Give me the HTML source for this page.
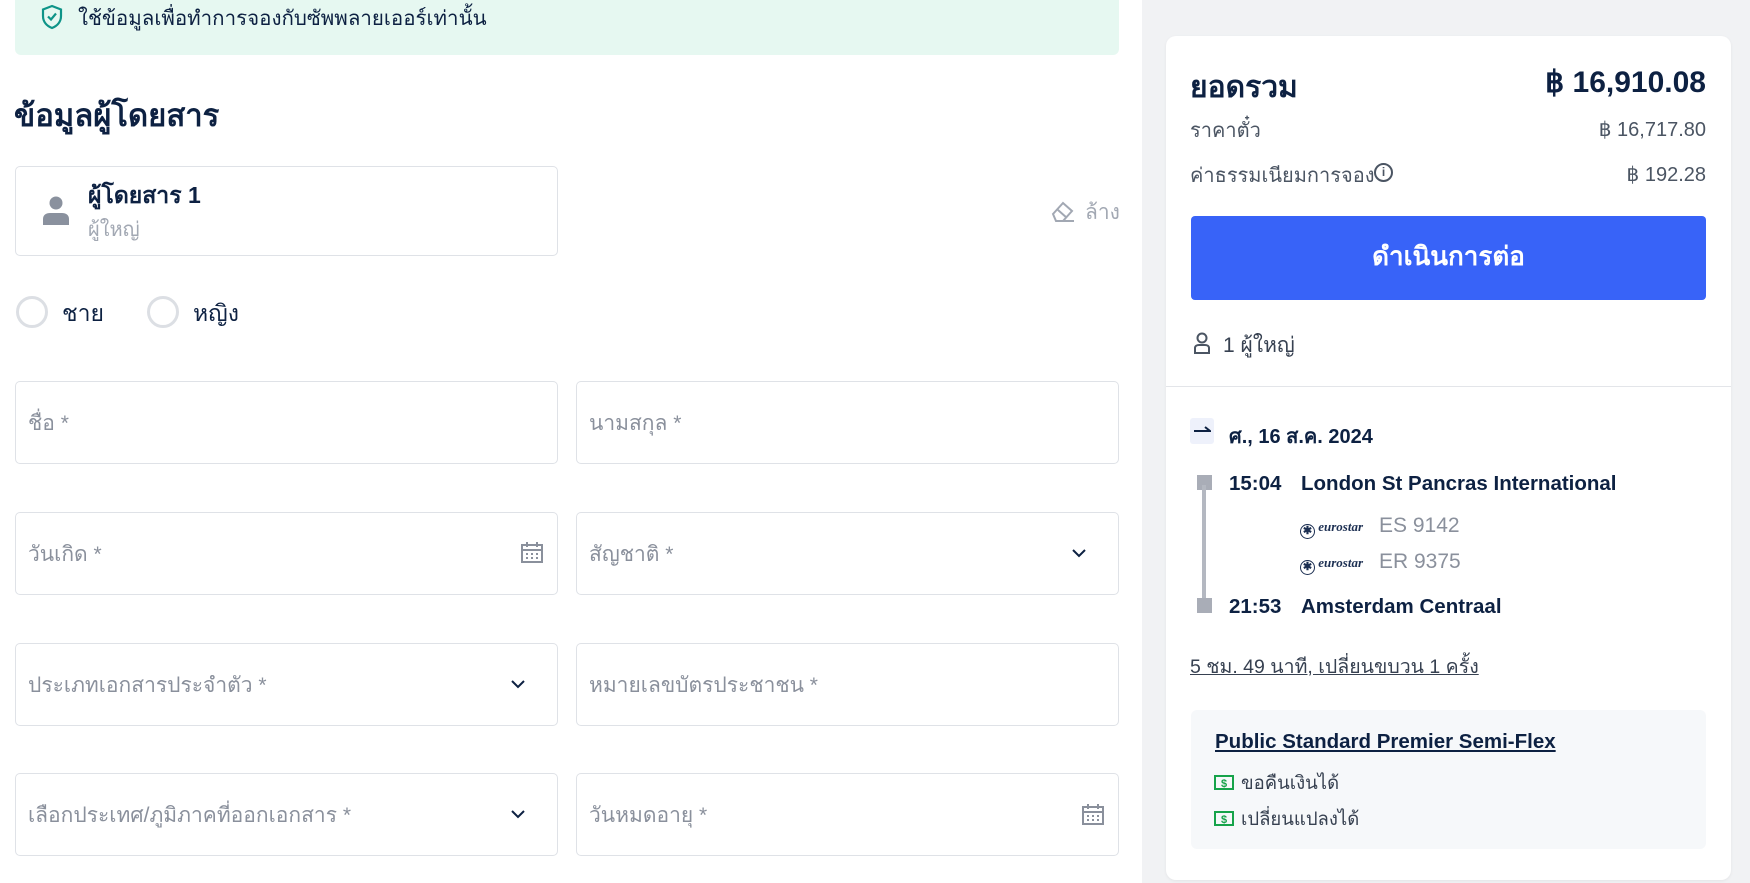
<!DOCTYPE html>
<html><head><meta charset="utf-8"><style>
*{box-sizing:border-box;margin:0;padding:0}
body{width:1750px;height:883px;overflow:hidden;background:#fff;font-family:"Liberation Sans","Noto Sans CJK SC",sans-serif;color:#0d2142;position:relative}
.a{position:absolute;white-space:nowrap}
.inp{position:absolute;border:1px solid #dfe2e7;border-radius:5px;height:83px;font-size:21px;color:#8a909c;padding-left:12px;line-height:83px}
</style></head><body>
<div class="a" style="left:15px;top:-10px;width:1104px;height:65px;background:#e6f8f1;border-radius:6px"></div>
<svg class="a" style="left:40px;top:4px" width="24" height="26" viewBox="0 0 24 26"><path d="M12 2 L21 5.5 V12 C21 18 17 22 12 24 C7 22 3 18 3 12 V5.5 Z" fill="none" stroke="#0e9488" stroke-width="2.2"/><path d="M8 12.5 L11 15.5 L16 9.5" fill="none" stroke="#0e9488" stroke-width="2.2"/></svg>
<div class="a" style="left:78px;top:2px;font-size:20.5px;color:#0d2142">ใช้ข้อมูลเพื่อทำการจองกับซัพพลายเออร์เท่านั้น</div>
<div class="a" style="left:14px;top:90px;font-size:31px;font-weight:bold">ข้อมูลผู้โดยสาร</div>
<div class="a" style="left:15px;top:166px;width:543px;height:90px;border:1px solid #dfe2e7;border-radius:5px"></div>
<svg class="a" style="left:41px;top:195px" width="30" height="32" viewBox="0 0 30 32"><circle cx="15" cy="8" r="6.5" fill="#8a919e"/><path d="M2 30 V24 C2 20 5 18 9 18 H21 C25 18 28 20 28 24 V30 Z" fill="#8a919e"/></svg>
<div class="a" style="left:88px;top:178px;font-size:23px;font-weight:bold">ผู้โดยสาร 1</div>
<div class="a" style="left:88px;top:213px;font-size:20px;color:#a2a8b3">ผู้ใหญ่</div>
<svg class="a" style="left:1050px;top:199px" width="26" height="26" viewBox="0 0 26 26"><path d="M3 15 L13 4 L22 12 L13 22 H6 Z M8 11 L17 19" fill="none" stroke="#a2a8b3" stroke-width="2"/><path d="M13 22 H24" stroke="#a2a8b3" stroke-width="2"/></svg>
<div class="a" style="left:1085px;top:196px;font-size:21px;color:#a2a8b3">ล้าง</div>
<div class="a" style="left:16px;top:296px;width:32px;height:32px;border:3px solid #dcdfe4;border-radius:50%"></div>
<div class="a" style="left:62px;top:296px;font-size:23px">ชาย</div>
<div class="a" style="left:147px;top:296px;width:32px;height:32px;border:3px solid #dcdfe4;border-radius:50%"></div>
<div class="a" style="left:193px;top:296px;font-size:23px">หญิง</div>

<div class="inp" style="left:15px;top:381px;width:543px">ชื่อ *</div>
<div class="inp" style="left:576px;top:381px;width:543px">นามสกุล *</div>
<div class="inp" style="left:15px;top:512px;width:543px">วันเกิด *</div>
<div class="inp" style="left:576px;top:512px;width:543px">สัญชาติ *</div>
<div class="inp" style="left:15px;top:643px;width:543px">ประเภทเอกสารประจำตัว *</div>
<div class="inp" style="left:576px;top:643px;width:543px">หมายเลขบัตรประชาชน *</div>
<div class="inp" style="left:15px;top:773px;width:543px">เลือกประเทศ/ภูมิภาคที่ออกเอกสาร *</div>
<div class="inp" style="left:576px;top:773px;width:543px">วันหมดอายุ *</div>
<svg class="a" style="left:520px;top:542px" width="24" height="22" viewBox="0 0 24 22"><rect x="2" y="3" width="20" height="17" fill="none" stroke="#8a909c" stroke-width="2"/><path d="M2 8 H22 M7 0 V5 M17 0 V5" stroke="#8a909c" stroke-width="2"/><path d="M6 12h2M11 12h2M16 12h2M6 16h2M11 16h2M16 16h2" stroke="#8a909c" stroke-width="2"/></svg>
<svg class="a" style="left:1081px;top:804px" width="24" height="22" viewBox="0 0 24 22"><rect x="2" y="3" width="20" height="17" fill="none" stroke="#8a909c" stroke-width="2"/><path d="M2 8 H22 M7 0 V5 M17 0 V5" stroke="#8a909c" stroke-width="2"/><path d="M6 12h2M11 12h2M16 12h2M6 16h2M11 16h2M16 16h2" stroke="#8a909c" stroke-width="2"/></svg>
<svg class="a" style="left:1071px;top:547px" width="16" height="12" viewBox="0 0 16 12"><path d="M2 3 L8 9 L14 3" fill="none" stroke="#0d2142" stroke-width="2"/></svg>
<svg class="a" style="left:510px;top:678px" width="16" height="12" viewBox="0 0 16 12"><path d="M2 3 L8 9 L14 3" fill="none" stroke="#0d2142" stroke-width="2"/></svg>
<svg class="a" style="left:510px;top:808px" width="16" height="12" viewBox="0 0 16 12"><path d="M2 3 L8 9 L14 3" fill="none" stroke="#0d2142" stroke-width="2"/></svg>

<div class="a" style="left:1142px;top:0;width:608px;height:883px;background:#f1f2f4"></div>
<div class="a" style="left:1166px;top:36px;width:565px;height:844px;background:#fff;border-radius:10px;box-shadow:0 1px 3px rgba(0,0,0,.06)"></div>
<div class="a" style="left:1190px;top:64px;font-size:30px;font-weight:bold">ยอดรวม</div>
<div class="a" style="right:44px;top:65px;font-size:30px;font-weight:bold">฿ 16,910.08</div>
<div class="a" style="left:1190px;top:114px;font-size:20px;color:#4b5563">ราคาตั๋ว</div>
<div class="a" style="right:44px;top:117px;font-size:20px;color:#4b5563">฿ 16,717.80</div>
<div class="a" style="left:1190px;top:159px;font-size:20px;color:#4b5563">ค่าธรรมเนียมการจอง</div>
<div class="a" style="left:1374px;top:163px;width:19px;height:19px;border:2px solid #4b5563;border-radius:50%;font-size:12px;font-weight:bold;text-align:center;line-height:15px;color:#4b5563">i</div>
<div class="a" style="right:44px;top:162px;font-size:20px;color:#4b5563">฿ 192.28</div>
<div class="a" style="left:1191px;top:216px;width:515px;height:84px;background:#3863f8;border-radius:4px;color:#fff;font-size:26px;font-weight:bold;text-align:center;line-height:80px">ดำเนินการต่อ</div>
<svg class="a" style="left:1192px;top:331px" width="20" height="24" viewBox="0 0 20 24"><circle cx="10" cy="7" r="4.5" fill="none" stroke="#4b5563" stroke-width="2"/><path d="M3 22 V17 C3 15 5 14 7 14 H13 C15 14 17 15 17 17 V22 Z" fill="none" stroke="#4b5563" stroke-width="2"/></svg>
<div class="a" style="left:1223px;top:329px;font-size:21px;color:#374151">1 ผู้ใหญ่</div>
<div class="a" style="left:1166px;top:386px;width:565px;height:1px;background:#e3e5e9"></div>

<div class="a" style="left:1190px;top:418px;width:24px;height:26px;background:#eef1fb;border-radius:3px"></div>
<svg class="a" style="left:1193px;top:424px" width="18" height="12" viewBox="0 0 18 12"><path d="M1 7 H17 L12 3" fill="none" stroke="#0d2142" stroke-width="2"/></svg>
<div class="a" style="left:1229px;top:420px;font-size:20px;font-weight:bold">ศ., 16 ส.ค. 2024</div>
<div class="a" style="left:1197px;top:475px;width:15px;height:15px;background:#a9adb7"></div>
<div class="a" style="left:1202px;top:485px;width:4px;height:120px;background:#b4b8c1"></div>
<div class="a" style="left:1197px;top:598px;width:15px;height:15px;background:#a9adb7"></div>
<div class="a" style="left:1229px;top:472px;font-size:20.5px;font-weight:bold">15:04</div>
<div class="a" style="left:1301px;top:472px;font-size:20.5px;font-weight:bold">London St Pancras International</div>
<div class="a" style="left:1229px;top:595px;font-size:20.5px;font-weight:bold">21:53</div>
<div class="a" style="left:1301px;top:595px;font-size:20.5px;font-weight:bold">Amsterdam Centraal</div>
<div class="a" style="left:1300px;top:519px;font-size:13px;font-weight:bold;font-style:italic;font-family:'Liberation Serif',serif;color:#1c2f52"><span style="display:inline-block;width:15px;height:15px;border:1.3px solid #1c2f52;border-radius:50%;font-size:11px;text-align:center;line-height:13px;font-style:normal;vertical-align:-3px">✱</span> eurostar</div>
<div class="a" style="left:1379px;top:514px;font-size:21px;color:#8a909c">ES 9142</div>
<div class="a" style="left:1300px;top:555px;font-size:13px;font-weight:bold;font-style:italic;font-family:'Liberation Serif',serif;color:#1c2f52"><span style="display:inline-block;width:15px;height:15px;border:1.3px solid #1c2f52;border-radius:50%;font-size:11px;text-align:center;line-height:13px;font-style:normal;vertical-align:-3px">✱</span> eurostar</div>
<div class="a" style="left:1379px;top:550px;font-size:21px;color:#8a909c">ER 9375</div>
<div class="a" style="left:1190px;top:651px;font-size:19.5px;color:#374151;text-decoration:underline">5 ชม. 49 นาที, เปลี่ยนขบวน 1 ครั้ง</div>
<div class="a" style="left:1191px;top:710px;width:515px;height:139px;background:#f6f8fa;border-radius:6px"></div>
<div class="a" style="left:1215px;top:730px;font-size:20.5px;font-weight:bold;text-decoration:underline">Public Standard Premier Semi-Flex</div>
<svg class="a" style="left:1214px;top:774px" width="20" height="17" viewBox="0 0 20 17"><rect x="1" y="2" width="18" height="13" fill="none" stroke="#16a34a" stroke-width="2"/><text x="10" y="13" font-size="11" font-weight="bold" fill="#16a34a" text-anchor="middle" font-family="Liberation Sans">$</text></svg>
<div class="a" style="left:1241px;top:769px;font-size:18.5px;color:#374151">ขอคืนเงินได้</div>
<svg class="a" style="left:1214px;top:810px" width="20" height="17" viewBox="0 0 20 17"><rect x="1" y="2" width="18" height="13" fill="none" stroke="#16a34a" stroke-width="2"/><text x="10" y="13" font-size="11" font-weight="bold" fill="#16a34a" text-anchor="middle" font-family="Liberation Sans">$</text></svg>
<div class="a" style="left:1241px;top:805px;font-size:18.5px;color:#374151">เปลี่ยนแปลงได้</div>
</body></html>
